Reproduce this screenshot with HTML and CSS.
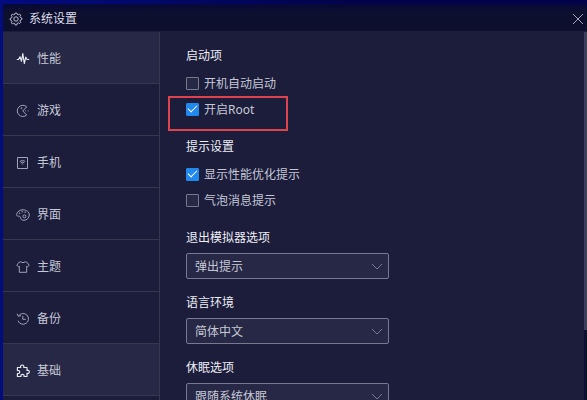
FILE: index.html
```html
<!DOCTYPE html>
<html lang="zh-CN">
<head>
<meta charset="utf-8">
<title>系统设置</title>
<link rel="stylesheet" href="styles.css">
</head>
<body>
<div class="window">
  <header class="titlebar">
    <svg class="icon title-icon" viewBox="0 0 14 14" aria-hidden="true"><path d="M5.8 2.3 6.2 1h1.6l.4 1.300 1.100.5 1.300-.7 1.100 1.100-.7 1.300.5 1.100 1.300.4v1.600l-1.300.4-.5 1.100.7 1.300-1.100 1.100-1.300-.7-1.100.5L7.800 13H6.200l-.4-1.300-1.100-.5-1.300.7-1.100-1.100.7-1.300-.5-1.100L1.200 8V6.400L2.500 6 3 4.500l-.7-1.300 1.100-1.100 1.300.7z"/><circle cx="7" cy="7" r="2.200"/></svg>
    <h1 class="title">系统设置</h1>
    <button class="close" type="button" aria-label="关闭"><svg class="close-icon" viewBox="0 0 12 12" aria-hidden="true"><path d="m1 1 10 10M11 1 1 11"/></svg></button>
  </header>
  <div class="body">
    <nav class="sidebar">
      <a class="nav-item active" href="#performance"><svg class="icon bold" viewBox="0 0 14 14" aria-hidden="true"><path d="M.8 7.500h1.700L4 4.800l1.500 4.400L6.800 1.600 8.300 11.500 9.800 5.200l1.300 2.300h2.100"/></svg>性能</a>
      <a class="nav-item" href="#games"><svg class="icon" viewBox="0 0 14 14" aria-hidden="true"><path d="M10.7 2.8A5.6 5.6 0 1 0 10.7 11L6.8 7z"/><circle cx="5.5" cy="4.2" r=".5"/><path d="M9.2 6.9h.8M11.8 6.9h.8"/></svg>游戏</a>
      <a class="nav-item" href="#phone"><svg class="icon" viewBox="0 0 14 14" aria-hidden="true"><path d="M1.500 1.500h10v11h-10zM3.800 5.400q2.700-2 5.400 0M4.700 6.800q1.800-1.300 3.600 0M5.700 8.200q.8-.6 1.600 0"/></svg>手机</a>
      <a class="nav-item" href="#interface"><svg class="icon" viewBox="0 0 14 14" aria-hidden="true"><path d="M2.4 8.2C.8 8.4.5 7 .8 5.9 1.4 3.3 4 1.8 7 1.8c3.6 0 6.3 2.3 6.3 5.2S10.7 12.3 8 12.3c-2 0-3.200-.8-3.300-2.200C4.6 8.800 3.800 8 2.400 8.200z"/><circle cx="3.7" cy="5.2" r=".4"/><circle cx="6.2" cy="3.800" r=".4"/><circle cx="9.200" cy="4.100" r=".4"/><circle cx="8.400" cy="8.300" r="1.500"/></svg>界面</a>
      <a class="nav-item" href="#theme"><svg class="icon" viewBox="0 0 14 14" aria-hidden="true"><path d="M4.7 1.8Q7 3.6 9.3 1.8l1.7.5 2.2 2.9-1.5 1.6-1-.6v6.1H3.3V6.2l-1 .6L.8 5.2 3 2.3z"/></svg>主题</a>
      <a class="nav-item" href="#backup"><svg class="icon" viewBox="0 0 14 14" aria-hidden="true"><path d="M2.500 4A5.400 5.400 0 1 1 2 8.700M1 1.700 2.300 4.300 5 3.600M6.800 3.800v3.500h3"/></svg>备份</a>
      <a class="nav-item active" href="#basic"><svg class="icon bold" viewBox="0 0 14 14" aria-hidden="true"><path d="M1.4 3.5h3.3C4.2 2.1 4.8 1 6.2 1s2 1.1 1.5 2.5H11v3c1.300-.4 2.300.2 2.300 1.400S12.300 9.700 11 9.300v3.200H8c.4-1.300-.3-2.200-1.500-2.200s-1.900.9-1.500 2.200H1.400V9.500c1.500.3 2.300-.4 2.300-1.500S2.900 6.300 1.400 6.700z"/></svg>基础</a>
    </nav>
    <main class="content">
      <section class="group">
        <h2 class="heading">启动项</h2>
        <label class="check"><input class="box" type="checkbox">开机自动启动</label>
        <label class="check marked"><input class="box" type="checkbox" checked>开启Root</label>
      </section>
      <section class="group">
        <h2 class="heading">提示设置</h2>
        <label class="check"><input class="box" type="checkbox" checked>显示性能优化提示</label>
        <label class="check"><input class="box" type="checkbox">气泡消息提示</label>
      </section>
      <section class="group">
        <h2 class="heading"><label for="exit">退出模拟器选项</label></h2>
        <div class="field"><select class="select" id="exit"><option>弹出提示</option></select><svg class="chevron" viewBox="0 0 12 8" aria-hidden="true"><path d="m1 1 5 5 5-5"/></svg></div>
      </section>
      <section class="group">
        <h2 class="heading"><label for="language">语言环境</label></h2>
        <div class="field"><select class="select" id="language"><option>简体中文</option></select><svg class="chevron" viewBox="0 0 12 8" aria-hidden="true"><path d="m1 1 5 5 5-5"/></svg></div>
      </section>
      <section class="group">
        <h2 class="heading"><label for="sleep">休眠选项</label></h2>
        <div class="field"><select class="select" id="sleep"><option>跟随系统休眠</option></select><svg class="chevron" viewBox="0 0 12 8" aria-hidden="true"><path d="m1 1 5 5 5-5"/></svg></div>
      </section>
    </main>
    <div class="track"><div class="thumb"></div></div>
  </div>
</div>
</body>
</html>
```
FILE: styles.css
```css
*,
*::before,
*::after {
  box-sizing: border-box;
}

body {
  margin: 0;
  height: 100vh;
  overflow: hidden;
  background: linear-gradient(90deg, #020b80, #02034a 60%);
  color: #c6c7d6;
  font: 12px/16px "Noto Sans", "Noto Sans CJK SC", sans-serif;
}

.window {
  display: flex;
  flex-direction: column;
  height: 100%;
  padding: 4px 0 0 3px;
}

.titlebar {
  display: flex;
  align-items: center;
  flex: none;
  gap: 6px;
  height: 27px;
  padding: 2px 3px 0 6px;
  background: linear-gradient(#06083a, #0d0f2e 8px);
}

.title {
  flex: 1;
  margin: 0;
  color: #dcdde8;
  font-size: 12px;
  font-weight: 400;
}

.icon {
  flex: none;
  width: 14px;
  height: 14px;
  fill: none;
  stroke: #a0a1b6;
  stroke-width: 1;
  stroke-linejoin: round;
}

.title-icon {
  stroke: #c0c1d2;
}

.bold {
  stroke: #e6e7f0;
  stroke-width: 1.2;
}

.close {
  display: flex;
  padding: 0;
  border: 0;
  background: none;
}

.close-icon {
  width: 12px;
  height: 12px;
  fill: none;
  stroke: #a5a6ba;
}

.body {
  display: flex;
  flex: 1;
  min-height: 0;
  padding-top: 1px;
  background: #1b1d3b;
}

.sidebar {
  flex: none;
  width: 157px;
  border-right: 1px solid #36384f;
}

.nav-item {
  display: flex;
  align-items: center;
  gap: 7px;
  height: 52px;
  padding: 2px 13px 0;
  border-bottom: 1px solid #36384f;
  color: #c6c7d6;
  text-decoration: none;
}

.active {
  background: #262845;
}

.content {
  display: flex;
  flex: 1;
  flex-direction: column;
  gap: 16px;
  min-width: 0;
  padding: 16px 26px;
  overflow: hidden;
}

.group {
  flex: none;
}

.heading {
  margin: 0 0 7px;
  color: #ededf5;
  font-size: 12px;
  font-weight: 400;
}

.check {
  position: relative;
  display: flex;
  align-items: center;
  gap: 5px;
  width: fit-content;
  height: 26px;
}

.marked::after {
  content: "";
  position: absolute;
  top: -1px;
  left: -18px;
  width: 120px;
  height: 35px;
  border: 2px solid #de434b;
  pointer-events: none;
}

.box {
  display: grid;
  place-items: center;
  appearance: none;
  width: 13px;
  height: 13px;
  margin: 0 0 2px;
  border: 1px solid #77798d;
  border-radius: 1px;
  background: #262845;
}

.box:checked {
  border-color: #2188f0;
  background: #2188f0;
}

.box:checked::before {
  content: "";
  width: 9px;
  height: 5px;
  margin-bottom: 3px;
  border: solid #fff;
  border-width: 0 0 1px 1px;
  transform: rotate(-45deg);
}

.field {
  position: relative;
  max-width: 203px;
}

.select {
  display: block;
  appearance: none;
  width: 100%;
  height: 26px;
  padding: 2px 28px 0 8px;
  border: 1px solid #777991;
  border-radius: 2px;
  background: #262845;
  color: #c6c7d6;
  font: inherit;
}

.chevron {
  position: absolute;
  top: 10px;
  right: 6px;
  width: 12px;
  height: 8px;
  fill: none;
  stroke: #77798d;
  pointer-events: none;
}

.track {
  flex: none;
  width: 3px;
  background: #0e1030;
}

.thumb {
  height: 81%;
  background: #3c3e5c;
}
```
